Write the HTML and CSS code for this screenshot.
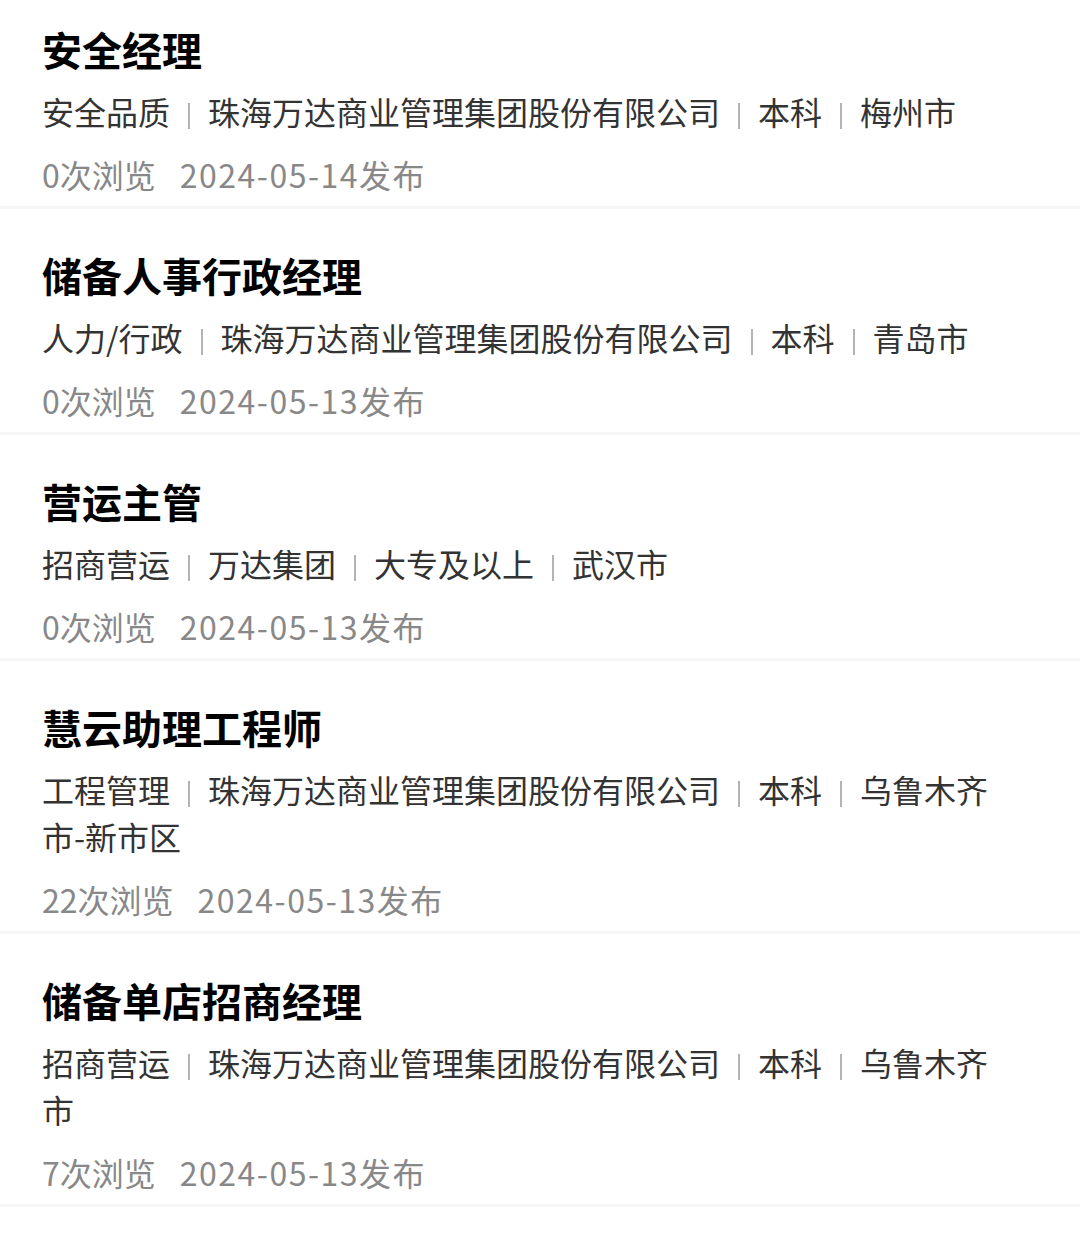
FILE: index.html
```html
<!DOCTYPE html>
<html lang="zh-CN">
<head>
    <meta charset="UTF-8">
    <meta name="viewport" content="width=device-width, initial-scale=1.0">
    <title>职位列表</title>
    <link rel="stylesheet" href="styles.css">
</head>
<body>
    <div class="job-list">
        <div class="job">
            <div class="job-title">安全经理</div>
            <div class="job-meta">安全品质<span class="sep"></span>珠海万达商业管理集团股份有限公司<span class="sep"></span>本科<span class="sep"></span>梅州市</div>
            <div class="job-info"><span class="views">0次浏览</span><span class="date">2024-05-14发布</span></div>
        </div>
        <div class="job">
            <div class="job-title">储备人事行政经理</div>
            <div class="job-meta">人力/行政<span class="sep"></span>珠海万达商业管理集团股份有限公司<span class="sep"></span>本科<span class="sep"></span>青岛市</div>
            <div class="job-info"><span class="views">0次浏览</span><span class="date">2024-05-13发布</span></div>
        </div>
        <div class="job">
            <div class="job-title">营运主管</div>
            <div class="job-meta">招商营运<span class="sep"></span>万达集团<span class="sep"></span>大专及以上<span class="sep"></span>武汉市</div>
            <div class="job-info"><span class="views">0次浏览</span><span class="date">2024-05-13发布</span></div>
        </div>
        <div class="job">
            <div class="job-title">慧云助理工程师</div>
            <div class="job-meta">工程管理<span class="sep"></span>珠海万达商业管理集团股份有限公司<span class="sep"></span>本科<span class="sep"></span>乌鲁木齐市-新市区</div>
            <div class="job-info"><span class="views">22次浏览</span><span class="date">2024-05-13发布</span></div>
        </div>
        <div class="job">
            <div class="job-title">储备单店招商经理</div>
            <div class="job-meta">招商营运<span class="sep"></span>珠海万达商业管理集团股份有限公司<span class="sep"></span>本科<span class="sep"></span>乌鲁木齐市</div>
            <div class="job-info"><span class="views">7次浏览</span><span class="date">2024-05-13发布</span></div>
        </div>
    </div>
</body>
</html>
```

FILE: styles.css
```css
body {
    margin: 0;
    background: #fff;
    font-family: "Noto Sans CJK SC", "Noto Sans", sans-serif;
    color: #333;
}
.job-list {
    display: flex;
    flex-direction: column;
}
.job {
    padding: 38px 80px 8px 42px;
    border-bottom: 3px solid #f6f6f6;
}
.job:first-child {
    padding-top: 21px;
}
.job-title {
    font-size: 40px;
    line-height: 56px;
    font-weight: 700;
    color: #000;
    margin-bottom: 11px;
}
.job-meta {
    font-size: 32px;
    line-height: 47px;
    color: #333;
}
.sep {
    display: inline-block;
    width: 2px;
    height: 26px;
    background: #b4b4b4;
    margin: 0 18px;
    vertical-align: -4px;
}
.job-info {
    font-size: 32px;
    line-height: 47px;
    color: #888;
    margin-top: 16px;
    display: flex;
    gap: 24px;
}
.date {
    letter-spacing: 1.5px;
}
```
